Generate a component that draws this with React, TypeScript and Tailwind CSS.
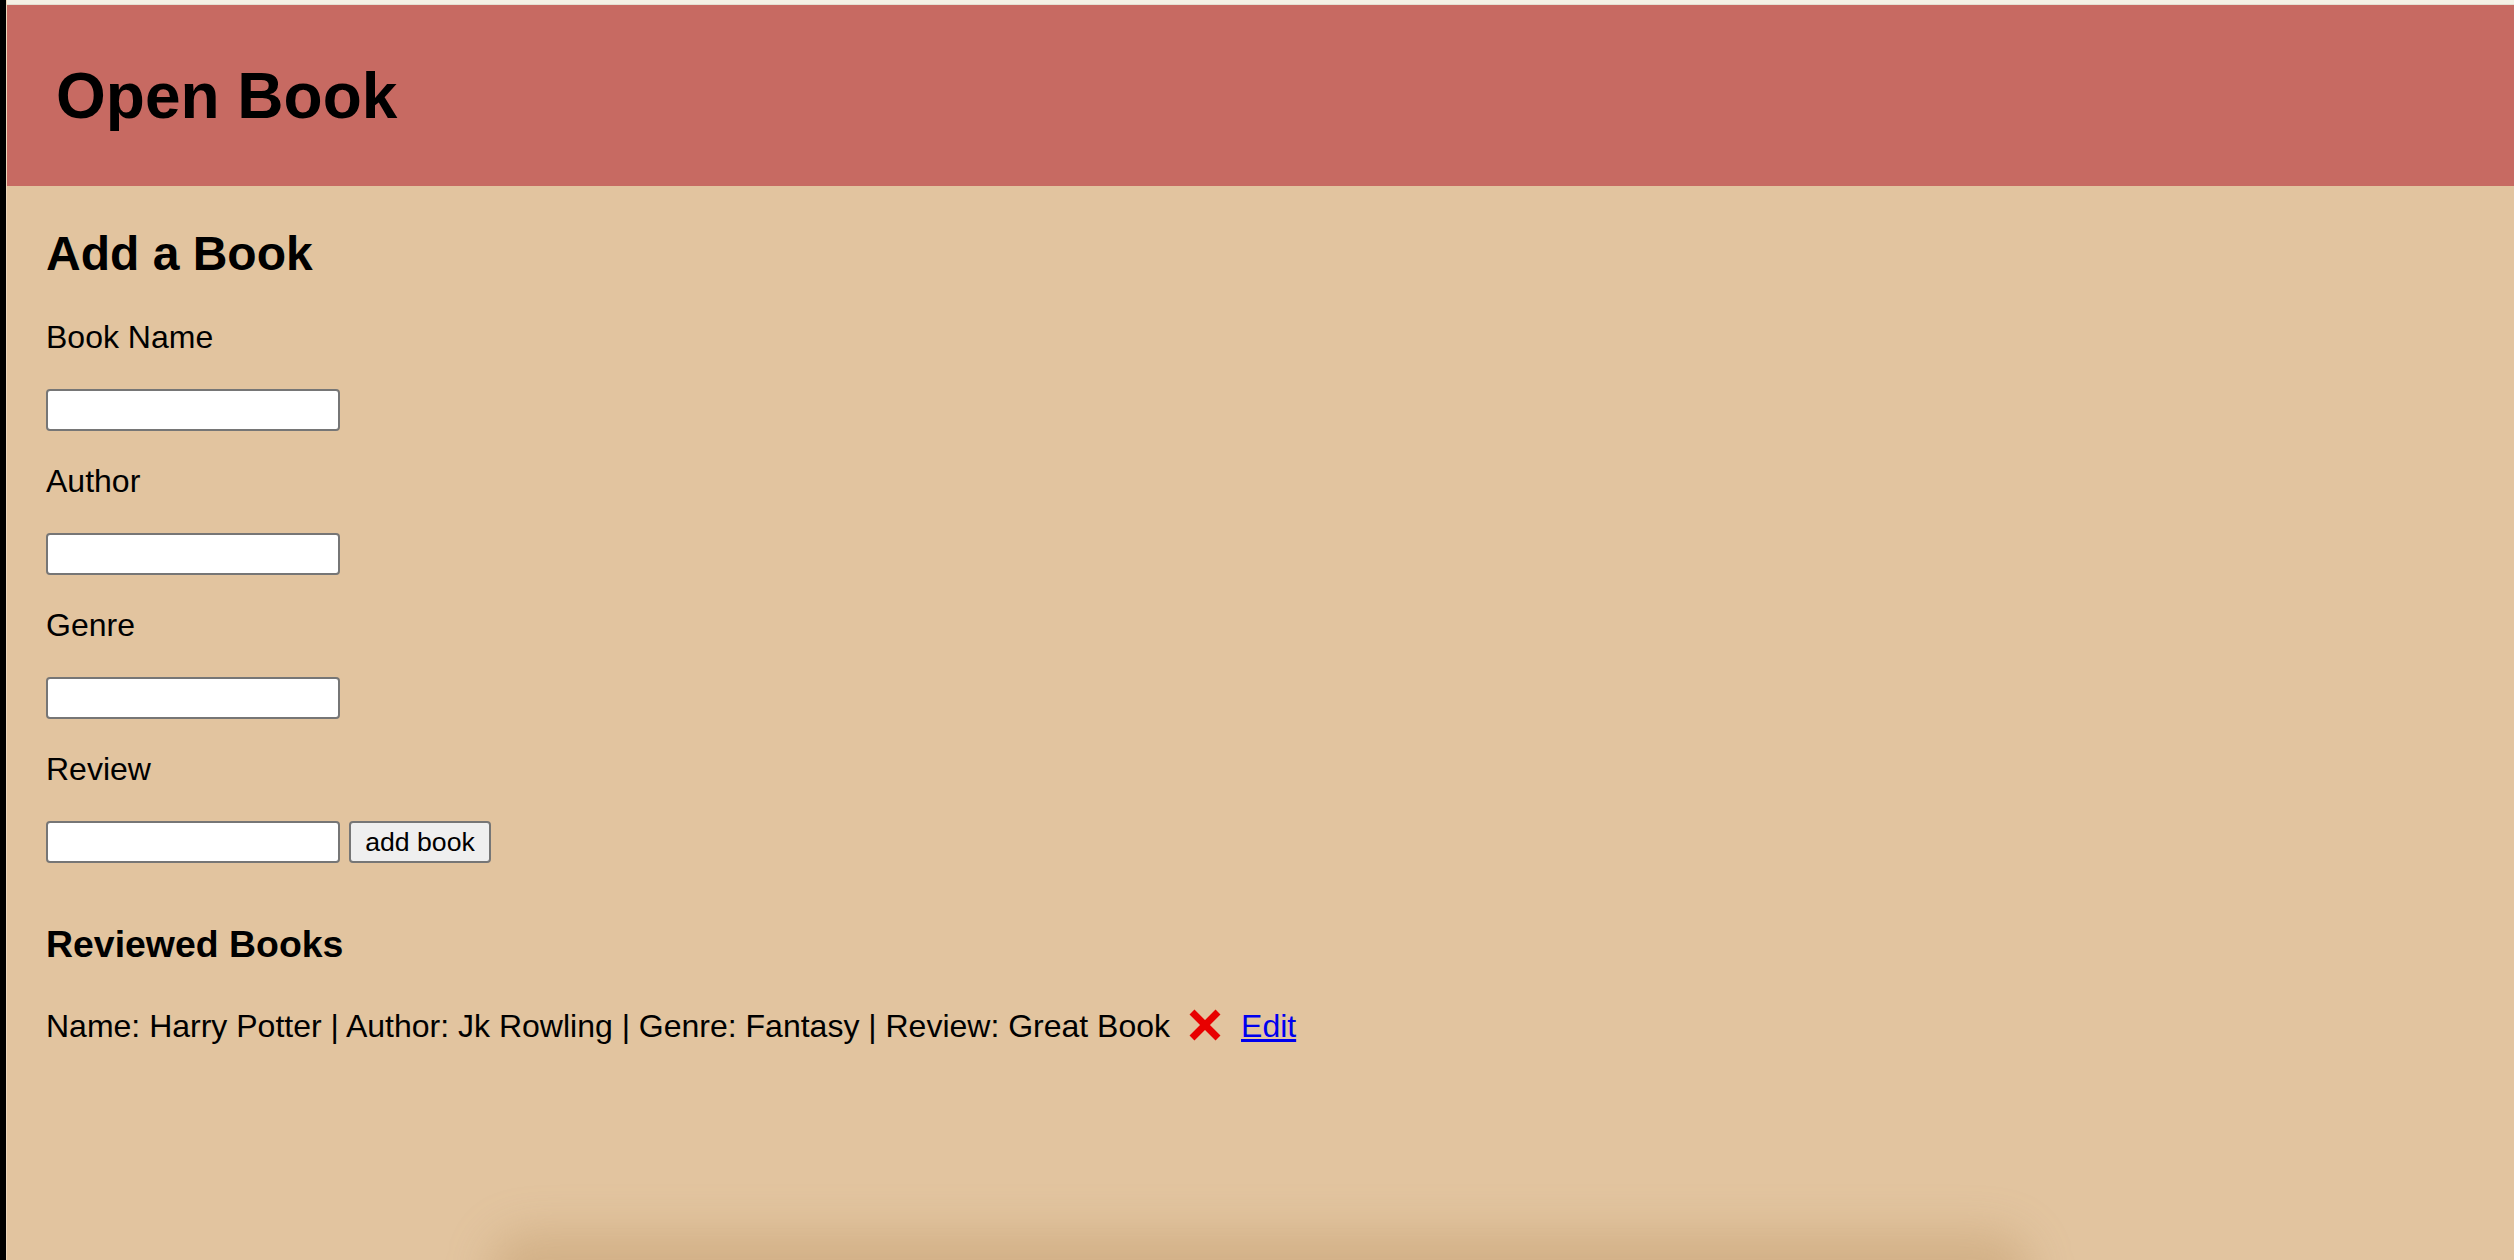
import React from "react";

function CrossMark() {
  return (
    <svg width="36" height="36" viewBox="0 0 36 36" className="inline-block align-[-6px]">
      <path d="M5 5 L31 31 M31 5 L5 31" stroke="#e80000" strokeWidth="7" strokeLinecap="butt" />
    </svg>
  );
}

function Field({ label, withButton }: { label: string; withButton?: boolean }) {
  return (
    <div className="flex flex-col">
      <div className="text-[32px] leading-[37px] mb-[33px]">{label}</div>
      <div className="flex items-center mb-[32px]">
        <input
          type="text"
          className="w-[294px] h-[42px] bg-white border-2 border-[#767676] rounded-[4px] outline-none"
        />
        {withButton && (
          <button className="ml-[9px] w-[142px] h-[42px] bg-[#efefef] border-2 border-[#767676] rounded-[4px] text-[26.67px] leading-none text-black">
            add book
          </button>
        )}
      </div>
    </div>
  );
}

export default function App() {
  return (
    <div
      className="relative w-full h-screen overflow-hidden bg-[#e2c49f] text-black flex"
      style={{ fontFamily: '"Liberation Sans", Arial, sans-serif' }}
    >
      <div className="w-[6px] h-full bg-black shrink-0" />
      <div className="w-[1px] h-full bg-[#ecd6ba] shrink-0" />
      <div className="flex-1 flex flex-col">
        <div className="h-[4px] bg-[#f4f1e5]" />
        <div className="h-[1px] bg-[#e4e0d2]" />
        <header className="h-[181px] bg-[#c76a62] flex items-center pl-[49px]">
          <h1 className="text-[64px] leading-[64px] font-bold">Open Book</h1>
        </header>
        <main className="flex flex-col pl-[39px]">
          <h2 className="mt-[40px] text-[48px] leading-[55px] font-bold">Add a Book</h2>
          <div className="mt-[38px] flex flex-col">
            <Field label="Book Name" />
            <Field label="Author" />
            <Field label="Genre" />
            <Field label="Review" withButton />
          </div>
          <h3 className="mt-[28px] text-[37.44px] leading-[43px] font-bold">Reviewed Books</h3>
          <div className="mt-[41px] text-[32px] leading-[37px] whitespace-nowrap">
            <span>Name: Harry Potter | Author: Jk Rowling | Genre: Fantasy | Review: Great Book</span>
            <span className="ml-[17px] mr-[18px]">
              <CrossMark />
            </span>
            <a href="#" className="text-[#0000ee] underline">
              Edit
            </a>
          </div>
        </main>
      </div>
      <div className="absolute left-[490px] w-[1540px] top-[1232px] h-[90px] rounded-[40px] bg-[#b08650]/30 blur-[22px] pointer-events-none" />
    </div>
  );
}
